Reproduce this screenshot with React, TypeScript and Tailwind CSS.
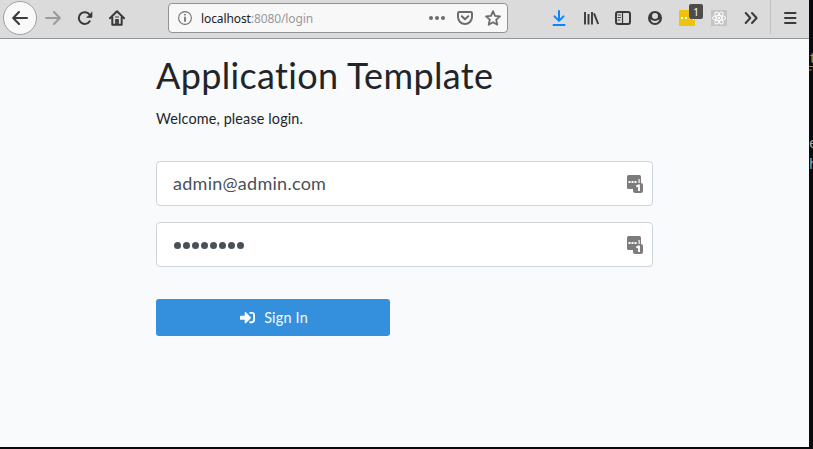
import type { ReactNode } from "react";
import { FaSignInAlt } from "react-icons/fa";

function Icon({ children, className = "text-[#3a3a3c]" }: { children: ReactNode; className?: string }) {
  return (
    <svg viewBox="0 0 16 16" className={`size-4 shrink-0 ${className}`} fill="none" stroke="currentColor" strokeWidth="2" strokeLinecap="round" strokeLinejoin="round">
      {children}
    </svg>
  );
}

function Toolbar() {
  return (
    <header className="flex h-[39px] shrink-0 items-start border-b border-[#949494] bg-[#dbdbdb]">
      <div className="flex h-9 items-center pl-[3px]">
        <div className="flex size-[34px] items-center justify-center rounded-full border border-[#a0a0a0] bg-[#f9f9f9]">
          <Icon><path d="M15 8H1.5M7 2 1.2 8 7 14" /></Icon>
        </div>
        <div className="ml-2 flex gap-4">
          <Icon className="text-[#9b9b9b]"><path d="M1 8h13.5M9 2l5.8 6L9 14" /></Icon>
          <Icon>
            <path d="M12.7 11.2A5.9 5.9 0 1 1 12.5 4.6" />
            <path d="M15 2v5.5H9.5Z" fill="currentColor" stroke="none" />
            <path d="M14.8 2.2v5H9.9" strokeWidth="1" />
          </Icon>
          <Icon>
            <path d="M1 8.2 8 1.3l7 6.9" />
            <path d="M3.3 7.5v7.2h9.4V7.5" />
            <path d="M7 14v-4h2v4" strokeWidth="1.8" />
            <path d="M6.5 7h3" strokeWidth="1" />
          </Icon>
        </div>
      </div>
      <div className="mt-[3px] ml-[43px] flex h-[30px] w-[340px] items-center rounded border border-[#929292] bg-[#f8f8f8] pr-1.5 pl-2">
        <Icon className="text-[#737373]">
          <circle cx="8" cy="8" r="6.4" strokeWidth="1.1" />
          <path d="M8 7.5V11" strokeWidth="1.8" />
          <path d="M8 4.6v.1" strokeWidth="1.8" />
        </Icon>
        <span className="mt-px ml-2 font-['Noto_Sans',sans-serif] text-[12px] leading-4 tracking-[-0.1px] text-[#999]">
          <span className="text-[#202020]">localhost</span>:8080/login
        </span>
        <div className="ml-auto flex gap-3">
          <Icon className="text-[#6c6c6c]">
            <g fill="currentColor" stroke="none"><circle cx="2" cy="8" r="2" /><circle cx="8" cy="8" r="2" /><circle cx="14" cy="8" r="2" /></g>
          </Icon>
          <Icon className="text-[#6c6c6c]">
            <path d="M2.2 2h11.6Q15 2 15 3.2V7a7 7 0 0 1-14 0V3.2Q1 2 2.2 2Z" />
            <path d="m4.8 6.3 3.2 3 3.2-3" />
          </Icon>
          <Icon className="text-[#6c6c6c]">
            <path d="m8 1.2 2 4.6 5 .5-3.8 3.4 1.1 5L8 12.2l-4.3 2.5 1.1-5L1 6.3l5-.5Z" strokeWidth="1.8" />
          </Icon>
        </div>
      </div>
      <div className="ml-[43px] flex h-9 items-center gap-4">
        <Icon className="text-[#0a84ff]"><path d="M8 1v9.5M3.5 6.4 8 10.9l4.5-4.5M2.5 15h11" /></Icon>
        <Icon>
          <path d="M2 2v12.5M5.5 4v10.5M9 2v12.5M11 3.3 15.2 14" strokeLinecap="butt" strokeWidth="1.9" />
        </Icon>
        <Icon>
          <rect x="1" y="2" width="14" height="12" rx="2" />
          <path d="M7.5 2v12" strokeWidth="1.2" />
          <path d="M3 5h2.5M3 7.5h2.5M3 10h1.8" strokeWidth="1" />
        </Icon>
        <Icon>
          <circle cx="8" cy="8" r="7" fill="currentColor" stroke="none" />
          <circle cx="8" cy="6" r="3" fill="#dbdbdb" stroke="none" />
          <path d="M3.5 9.2Q8 12.800 12.500 9.200 11.800 12.900 8 12.900T3.500 9.200Z" fill="#dbdbdb" stroke="none" />
        </Icon>
        <div className="relative flex size-4 items-center gap-[2px] rounded-[1px] bg-[#efc20e] pl-[2px]">
          <i className="size-[2px] bg-white" /><i className="size-[2px] bg-white" /><i className="size-[2px] bg-white" />
          <i className="h-1 w-px bg-white" />
          <span className="absolute -top-[6px] left-[10px] flex h-[15px] w-[14px] items-center justify-center rounded-[2px] bg-[#4c4c4c] font-['Noto_Sans',sans-serif] text-[10px] leading-none text-white">1</span>
        </div>
        <div className="flex size-4 items-center justify-center bg-[#c4c4c4]">
          <svg viewBox="0 0 16 16" className="size-4 text-white" fill="none" stroke="currentColor" strokeWidth="1">
            <ellipse cx="8" cy="8" rx="6.6" ry="2.5" />
            <ellipse cx="8" cy="8" rx="6.6" ry="2.5" transform="rotate(60 8 8)" />
            <ellipse cx="8" cy="8" rx="6.6" ry="2.5" transform="rotate(120 8 8)" />
            <circle cx="8" cy="8" r="1.2" fill="currentColor" stroke="none" />
          </svg>
        </div>
        <Icon><path d="m2.7 3 4.6 5-4.6 5M9 3l4.6 5L9 13" /></Icon>
      </div>
      <div className="ml-[11px] h-[34px] w-px bg-[#c0c0c0]" />
      <div className="ml-[11px] flex h-9 items-center">
        <Icon><path d="M3 3h10.500M3 8h10.500M3 13h10.500" /></Icon>
      </div>
    </header>
  );
}

function ManagerIcon() {
  return (
    <svg viewBox="0 0 17 18" className="h-[18px] w-[17px]">
      <rect width="14" height="14" rx="1.5" fill="#7c7c7c" />
      <path d="M1.5 6h2v2h-2zM4.500 6h2v2h-2zM7.500 6h2v2h-2zM11.500 4h1.200v4h-1.200z" fill="white" />
      <rect x="6" y="8" width="10" height="10" rx="2" fill="#7c7c7c" />
      <path d="M9.300 11.600 11.300 10.400H12V16" fill="none" stroke="white" strokeWidth="1.9" />
    </svg>
  );
}

function Field({ children }: { children: ReactNode }) {
  return (
    <div className="flex h-[45px] items-center justify-between rounded-[4px] border border-[#ced4da] bg-white pr-2 pl-4 text-[#495057]">
      {children}
      <ManagerIcon />
    </div>
  );
}

export default function App() {
  return (
    <div className="h-[449px] w-[813px] overflow-hidden bg-[#080a0d] font-[Lato,sans-serif]">
      <div className="flex h-[447px]">
        <div className="flex w-[809px] shrink-0 flex-col bg-[#f8fafc]">
          <Toolbar />
          <main className="ml-[156px] w-[497px] pt-[15px] text-[#212529]">
            <h1 className="h-[43px] text-[36px] leading-[43px] tracking-[0.34px] whitespace-nowrap">Application Template</h1>
            <p className="mt-[11px] h-[22px] text-[14.4px] leading-[22px] tracking-[0.14px]">Welcome, please login.</p>
            <div className="mt-[31px] flex flex-col gap-4">
              <Field><span className="text-[18px] leading-[27px] tracking-[0.27px]">admin@admin.com</span></Field>
              <Field>
                <div className="mt-[2px] flex gap-[2px] pl-px">
                  {Array.from({ length: 8 }, (_, i) => <i key={i} className="size-[7px] rounded-full bg-[#495057]" />)}
                </div>
              </Field>
            </div>
            <button className="mt-8 flex h-[37px] w-[234px] items-center justify-center gap-[9px] rounded-[3px] bg-[#3490dc] pl-[2px] text-[14.4px] text-[#f8fafc]">
              <FaSignInAlt className="size-[15px]" />
              <span className="pt-px tracking-[0.2px]">Sign In</span>
            </button>
          </main>
        </div>
        <div className="w-1 overflow-hidden pt-3 font-['Liberation_Mono',monospace] text-[14px] leading-[21px]">
          <div className="mt-[37px] h-[18px] border-b border-[#a78b46] text-[#8ca668]">t</div>
          <div className="mt-[2px] w-[3px] border-t-2 border-[#802b28]" />
          <div className="mt-[63px] text-[#a9aaa5]">e</div>
          <div className="text-[#a0a8b1]">h</div>
        </div>
      </div>
    </div>
  );
}
